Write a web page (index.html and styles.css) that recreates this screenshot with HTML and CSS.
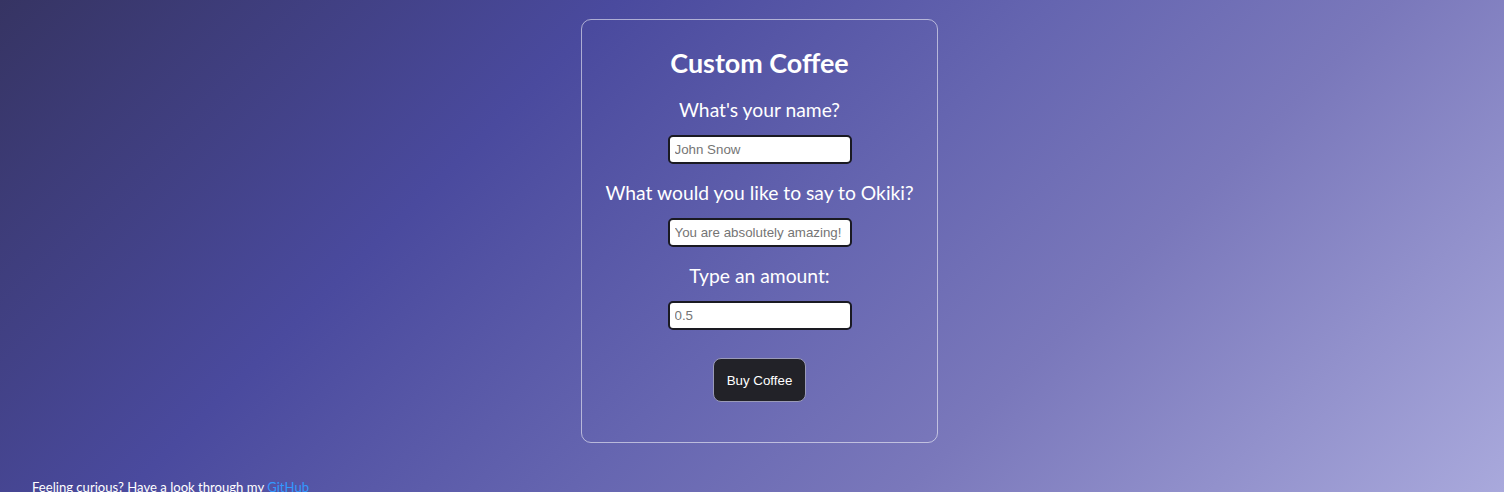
FILE: index.html
```html
<!DOCTYPE html>
<html lang="en">
<head>
<meta charset="utf-8">
<title>Custom Coffee</title>
<link rel="stylesheet" href="styles.css">
</head>
<body>
<main class="page">
  <form class="card">
    <h1 class="title">Custom Coffee</h1>
    <label class="label" for="name">What's your name?</label>
    <input class="field" id="name" type="text" placeholder="John Snow">
    <label class="label" for="msg">What would you like to say to Okiki?</label>
    <input class="field" id="msg" type="text" placeholder="You are absolutely amazing!">
    <label class="label" for="amt">Type an amount:</label>
    <input class="field" id="amt" type="text" placeholder="0.5">
    <button class="buy" type="button">Buy Coffee</button>
  </form>
</main>
<footer class="footer">Feeling curious? Have a look through my <a class="link" href="#">GitHub</a></footer>
</body>
</html>
```

FILE: styles.css
```css
html, body {
  margin: 0;
  height: 100%;
}
body {
  background: linear-gradient(135deg, #363463 0%, #4a4a9e 31%, #6565b0 53%, #7a78bb 70%, #a9a9dc 100%);
  color: #ffffff;
  font-family: Lato, "Open Sans", sans-serif;
  overflow: hidden;
}
.page {
  display: flex;
  justify-content: center;
  padding: 19px 0 0 15px;
}
.card {
  width: 357px;
  box-sizing: border-box;
  border: 1px solid rgba(255, 255, 255, 0.55);
  border-radius: 10px;
  padding: 27px 0 40px;
  display: flex;
  flex-direction: column;
  align-items: center;
}
.title {
  margin: 0;
  font-size: 26.9px;
  line-height: 32px;
  font-weight: 700;
}
.label {
  font-size: 19.3px;
  line-height: 24px;
  margin: 19px 0 13px;
}
.title + .label {
  margin-top: 19px;
}
.field + .label {
  margin-top: 17px;
}
.field {
  width: 184px;
  height: 29px;
  box-sizing: border-box;
  border: 2px solid #1a1a22;
  border-radius: 5px;
  background: #ffffff;
  padding: 0 5px;
  font-family: "Liberation Sans", Arial, sans-serif;
  font-size: 13.33px;
  color: #222;
  outline: none;
}
.field::placeholder {
  color: #757575;
}
.buy {
  margin-top: 28px;
  width: 93px;
  height: 44px;
  background: #222228;
  color: #ffffff;
  border: 1px solid #9a9ab8;
  border-radius: 8px;
  font-family: "Liberation Sans", Arial, sans-serif;
  font-size: 13.33px;
  cursor: pointer;
}
.footer {
  padding: 0 32px;
  margin-top: 36px;
  font-size: 13.1px;
  line-height: 16px;
}
.link {
  color: #3399ff;
  text-decoration: none;
}
```
